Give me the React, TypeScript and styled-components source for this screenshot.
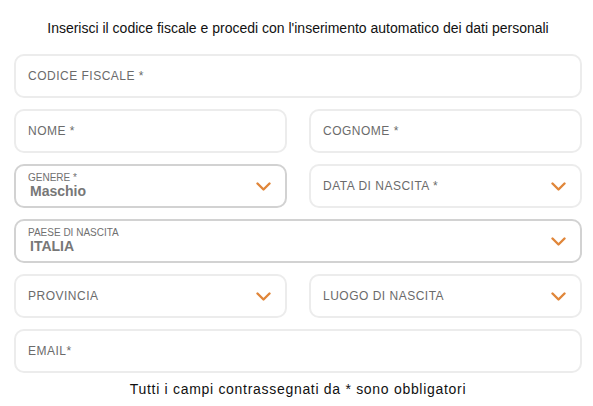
import styled, { createGlobalStyle } from 'styled-components';

const GlobalStyle = createGlobalStyle`
  html, body {
    margin: 0;
    padding: 0;
    background: #ffffff;
  }
  body {
    font-family: 'Liberation Sans', Arial, sans-serif;
  }
`;

const Page = styled.div`
  width: 593px;
  height: 406px;
  box-sizing: border-box;
  padding: 19px 11px 0 14px;
  display: flex;
  flex-direction: column;
`;

const Intro = styled.p`
  margin: 0 0 17px 0;
  text-align: center;
  font-size: 14px;
  line-height: 18px;
  color: #111;
`;

const Form = styled.div`
  display: flex;
  flex-direction: column;
  gap: 11px;
`;

const Row = styled.div`
  display: grid;
  grid-template-columns: 1fr 1fr;
  column-gap: 22px;
`;

const Field = styled.div<{ $filled?: boolean }>`
  height: 44px;
  box-sizing: border-box;
  border: 2px solid ${({ $filled }) => ($filled ? '#d2d2d2' : '#ececec')};
  border-radius: 10px;
  background: #fff;
  padding: 0 12px 0 12px;
  display: flex;
  align-items: center;
  justify-content: space-between;
`;

const FieldText = styled.div`
  display: flex;
  flex-direction: column;
  justify-content: center;
`;

const Placeholder = styled.span`
  font-size: 12px;
  color: #6b6b6b;
  letter-spacing: 0.5px;
`;

const SmallLabel = styled.span`
  font-size: 10px;
  line-height: 11px;
  color: #707070;
  margin-top: -2px;
`;

const Value = styled.span`
  font-size: 14px;
  line-height: 16px;
  font-weight: bold;
  color: #777;
  padding-left: 2px;
`;

const Chevron = styled.svg`
  width: 15px;
  height: 9px;
  flex-shrink: 0;
  margin-right: 2px;
`;

const Note = styled.p`
  margin: 7px 0 0 0;
  text-align: center;
  font-size: 14px;
  line-height: 18px;
  letter-spacing: 0.7px;
  color: #111;
`;

const Arrow = () => (
  <Chevron viewBox="0 0 15 9">
    <path d="M1.5 1.5 L7.5 7.5 L13.5 1.5" fill="none" stroke="#e0863a" strokeWidth="2.4" strokeLinecap="round" strokeLinejoin="round" />
  </Chevron>
);

type InputProps = { label: string; select?: boolean };

const TextInput = ({ label, select }: InputProps) => (
  <Field>
    <Placeholder>{label}</Placeholder>
    {select && <Arrow />}
  </Field>
);

const FilledSelect = ({ label, value }: { label: string; value: string }) => (
  <Field $filled>
    <FieldText>
      <SmallLabel>{label}</SmallLabel>
      <Value>{value}</Value>
    </FieldText>
    <Arrow />
  </Field>
);

export default function App() {
  return (
    <>
      <GlobalStyle />
      <Page>
        <Intro>Inserisci il codice fiscale e procedi con l'inserimento automatico dei dati personali</Intro>
        <Form>
          <TextInput label="CODICE FISCALE *" />
          <Row>
            <TextInput label="NOME *" />
            <TextInput label="COGNOME *" />
          </Row>
          <Row>
            <FilledSelect label="GENERE *" value="Maschio" />
            <TextInput label="DATA DI NASCITA *" select />
          </Row>
          <FilledSelect label="PAESE DI NASCITA" value="ITALIA" />
          <Row>
            <TextInput label="PROVINCIA" select />
            <TextInput label="LUOGO DI NASCITA" select />
          </Row>
          <TextInput label="EMAIL*" />
        </Form>
        <Note>Tutti i campi contrassegnati da * sono obbligatori</Note>
      </Page>
    </>
  );
}
